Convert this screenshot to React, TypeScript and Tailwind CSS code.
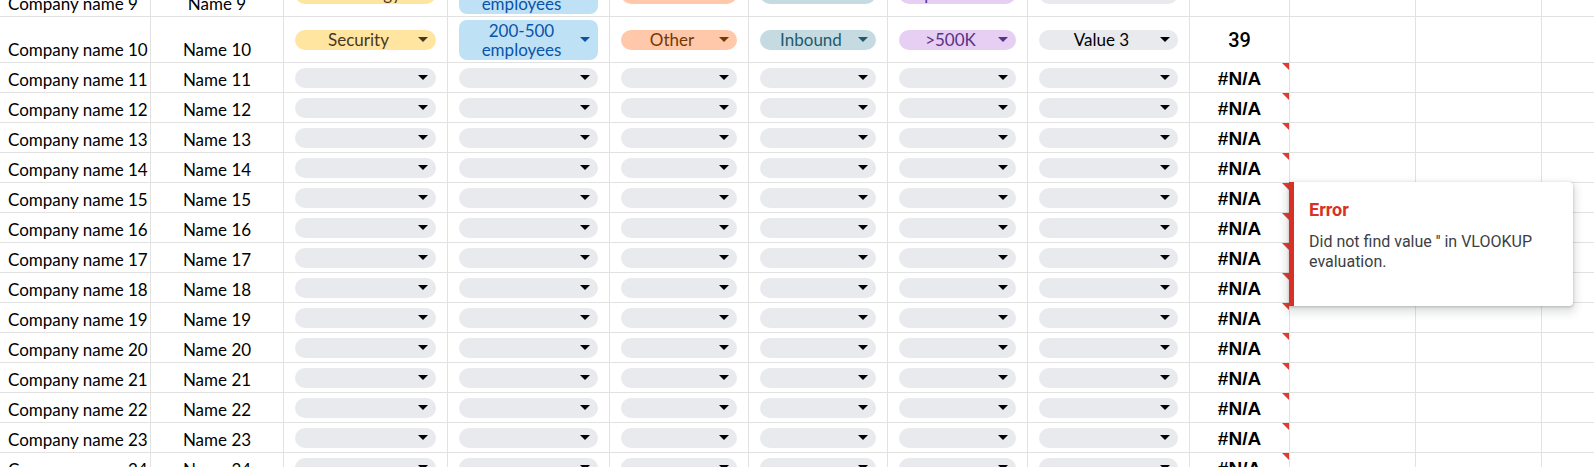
import React from 'react';

type Tone = 'yellow' | 'blue' | 'orange' | 'teal' | 'purple' | 'gray';

const tones: Record<Tone, { chip: string; caret: string }> = {
    yellow: { chip: 'bg-[#ffe5a0] text-[#473822]', caret: 'fill-[#473822]' },
    blue: { chip: 'bg-[#bfe1f6] text-[#0a53a8]', caret: 'fill-[#0a53a8]' },
    orange: { chip: 'bg-[#ffc8aa] text-[#753800]', caret: 'fill-[#753800]' },
    teal: { chip: 'bg-[#c6dbe1] text-[#215a6c]', caret: 'fill-[#215a6c]' },
    purple: { chip: 'bg-[#e6cff2] text-[#5a3286]', caret: 'fill-[#5a3286]' },
    gray: { chip: 'bg-[#e8eaed] text-black', caret: 'fill-black' },
};

type Row = {
    company: string;
    name: string;
    tall?: boolean;
    chips: { tone: Tone; label?: string; lines?: string[] }[];
    result?: string;
};

const emptyChips: Row['chips'] = [
    { tone: 'gray' }, { tone: 'gray' }, { tone: 'gray' },
    { tone: 'gray' }, { tone: 'gray' }, { tone: 'gray' },
];

const rows: Row[] = [
    {
        company: 'Company name 9',
        name: 'Name 9',
        tall: true,
        chips: [
            { tone: 'yellow', label: 'Technology' },
            { tone: 'blue', lines: ['50-200', 'employees'] },
            { tone: 'orange', label: 'Finance' },
            { tone: 'teal', label: 'Outbound' },
            { tone: 'purple', label: 'Up to 50K' },
            { tone: 'gray', label: 'Value 2' },
        ],
    },
    {
        company: 'Company name 10',
        name: 'Name 10',
        tall: true,
        chips: [
            { tone: 'yellow', label: 'Security' },
            { tone: 'blue', lines: ['200-500', 'employees'] },
            { tone: 'orange', label: 'Other' },
            { tone: 'teal', label: 'Inbound' },
            { tone: 'purple', label: '>500K' },
            { tone: 'gray', label: 'Value 3' },
        ],
        result: '39',
    },
    ...Array.from({ length: 14 }, (_, i) => ({
        company: `Company name ${i + 11}`,
        name: `Name ${i + 11}`,
        chips: emptyChips,
        result: '#N/A',
    })),
];

const cell = 'border-r border-b border-[#e2e2e2]';

function Caret({ className }: { className: string }) {
    return (
        <svg width="10" height="5" viewBox="0 0 10 5" className={`shrink-0 ${className}`}>
            <path d="M0 0h10L5 5z" />
        </svg>
    );
}

function Chip({ tone, label, lines }: { tone: Tone; label?: string; lines?: string[] }) {
    const t = tones[tone];
    if (lines) {
        return (
            <div className={`flex h-[40px] w-full items-center rounded-lg pl-1 pr-[8px] ${t.chip}`}>
                <div className="flex-1 text-center text-[17px] leading-[19px]">
                    {lines.map(l => (
                        <div key={l}>{l}</div>
                    ))}
                </div>
                <Caret className={t.caret} />
            </div>
        );
    }
    return (
        <div className={`flex h-[20px] w-full items-center rounded-full pl-1 pr-[8px] ${t.chip}`}>
            <span className="flex-1 text-center text-[17px] leading-[20px] whitespace-nowrap">{label}</span>
            <Caret className={t.caret} />
        </div>
    );
}

export default function App() {
    return (
        <div className="relative h-[467px] w-[1594px] overflow-hidden bg-white font-[Lato,sans-serif] text-black">
            <div className="-mt-[29px]">
                {rows.map(row => (
                    <div
                        key={row.company}
                        className={`grid grid-cols-[151px_133px_164px_162px_139px_139px_140px_162px_100px_126px_126px_126px] ${row.tall ? 'h-[46px]' : 'h-[30px]'}`}
                    >
                        <div className={`${cell} flex items-end pl-2 pb-[2px] text-[17px] leading-[20px] whitespace-nowrap`}>
                            {row.company}
                        </div>
                        <div className={`${cell} flex items-end justify-center pb-[2px] text-[17px] leading-[20px] whitespace-nowrap`}>
                            {row.name}
                        </div>
                        {row.chips.map((c, i) => (
                            <div key={i} className={`${cell} flex items-center px-[11px]`}>
                                <Chip {...c} />
                            </div>
                        ))}
                        <div className={`${cell} relative flex items-center justify-center`}>
                            {row.result === '#N/A' ? (
                                <>
                                    <span className="mt-[2px] font-['Liberation_Sans',sans-serif] text-[19px] leading-[20px] font-bold">#N/A</span>
                                    <span className="absolute right-0 top-0 h-0 w-0 border-t-[7px] border-l-[7px] border-t-[#e03b2f] border-l-transparent" />
                                </>
                            ) : (
                                <span className="font-[Roboto,sans-serif] text-[20px] leading-[20px] font-medium">{row.result}</span>
                            )}
                        </div>
                        <div className={cell} />
                        <div className={cell} />
                        <div className={cell} />
                    </div>
                ))}
            </div>

            <div className="absolute left-[1289px] top-[182px] h-[124px] w-[284px] rounded-r border-l-[5px] border-[#d93025] bg-white pl-[15px] pt-[15px] pr-4 font-[Roboto,sans-serif] shadow-[0_1px_3px_rgba(60,64,67,0.3),0_4px_8px_3px_rgba(60,64,67,0.15)]">
                <div className="text-[18px] leading-[26px] font-bold text-[#d93025]">Error</div>
                <div className="mt-[9px] text-[16px] leading-[20px] text-[#3c4043]">
                    Did not find value '' in VLOOKUP evaluation.
                </div>
            </div>
        </div>
    );
}
